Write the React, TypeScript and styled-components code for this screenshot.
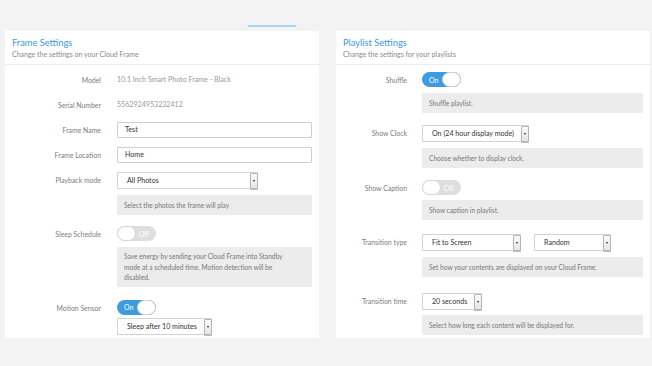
import styled, { createGlobalStyle } from "styled-components";

const GlobalStyle = createGlobalStyle`
  html, body {
    margin: 0;
    padding: 0;
    background: #f3f3f3;
    font-family: Lato, "Open Sans", sans-serif;
  }
`;

const Page = styled.div`
  width: 652px;
  height: 366px;
  background: #f3f3f3;
  overflow: hidden;
`;

const TopBar = styled.div`
  height: 31px;
  box-sizing: border-box;
  padding: 25px 0 0 248px;
`;

const TabLine = styled.div`
  width: 48px;
  height: 2px;
  background: #a6d3ef;
`;

const Columns = styled.div`
  display: flex;
  gap: 17px;
  padding-left: 5px;
`;

const Card = styled.section`
  width: 314px;
  height: 307px;
  background: #fff;
  box-sizing: border-box;
`;

const Header = styled.div`
  height: 34px;
  box-sizing: border-box;
  padding: 6px 7px 0;
  border-bottom: 1px solid #ececec;
`;

const Title = styled.div`
  font-size: 9.3px;
  line-height: 12px;
  color: #3b9bdc;
`;

const Subtitle = styled.div`
  font-size: 7px;
  line-height: 10px;
  color: #8a8a8a;
`;

const Body = styled.div`
  display: flex;
  flex-direction: column;
  padding-right: 7px;
`;

const Row = styled.div<{ $label: number; $gap: number; $mt: number }>`
  display: grid;
  grid-template-columns: ${(p) => p.$label}px 1fr;
  column-gap: ${(p) => p.$gap}px;
  margin-top: ${(p) => p.$mt}px;
`;

const Label = styled.div`
  text-align: right;
  font-size: 6.9px;
  line-height: 16px;
  color: #7d7d7d;
`;

const Field = styled.div<{ $gap?: number }>`
  display: flex;
  flex-direction: column;
  align-items: flex-start;
  gap: ${(p) => p.$gap ?? 6}px;
`;

const Value = styled.div`
  font-size: 7.1px;
  line-height: 16px;
  color: #9a9a9a;
`;

const Input = styled.div`
  width: 100%;
  height: 16px;
  box-sizing: border-box;
  border: 1px solid #cfcfcf;
  border-radius: 1px;
  padding-left: 7px;
  font-size: 7.1px;
  line-height: 14px;
  color: #333;
`;

const SelectBox = styled.div<{ $w: number }>`
  display: flex;
  width: ${(p) => p.$w}px;
  height: 17px;
  box-sizing: border-box;
  border: 1px solid #d3d3d3;
  border-radius: 1px;
  background: #fff;
`;

const SelectText = styled.div`
  flex: 1;
  padding-left: 9px;
  font-size: 7.1px;
  line-height: 15px;
  color: #333;
  white-space: nowrap;
`;

const ArrowBtn = styled.div`
  width: 6px;
  margin: 0 -1px -1px 0;
  border: 1px solid #b5b5b5;
  border-radius: 1px;
  background: linear-gradient(#fafafa, #e6e6e6);
  display: flex;
  align-items: center;
  justify-content: center;
  box-shadow: 0 1px 0 #bdbdbd;
`;

const Arrow = styled.div`
  width: 0;
  height: 0;
  border-left: 1.5px solid transparent;
  border-right: 1.5px solid transparent;
  border-top: 2px solid #222;
`;

const SelectPair = styled.div`
  display: flex;
  gap: 13px;
`;

const Help = styled.div<{ $multi?: boolean }>`
  width: 100%;
  box-sizing: border-box;
  background: #ececec;
  padding: ${(p) => (p.$multi ? "4px 16px 4px 7px" : "5px 7px")};
  font-size: 6.6px;
  line-height: ${(p) => (p.$multi ? "10.5px" : "10px")};
  color: #777;
`;

const ToggleTrack = styled.div<{ $on: boolean }>`
  position: relative;
  width: 39px;
  height: 15px;
  box-sizing: border-box;
  border-radius: 8px;
  background: ${(p) => (p.$on ? "#3d9be0" : "#dedede")};
  display: flex;
  align-items: center;
  justify-content: ${(p) => (p.$on ? "flex-start" : "flex-end")};
  padding: 0 7px;
  font-size: 7px;
  color: #fff;
`;

const Knob = styled.div<{ $on: boolean }>`
  position: absolute;
  top: 0;
  ${(p) => (p.$on ? "right: 0;" : "left: 0;")}
  width: 19px;
  height: 15px;
  box-sizing: border-box;
  border-radius: 8px;
  background: #fff;
  border: 1px solid #d5d5d5;
`;

function Toggle({ on }: { on: boolean }) {
  return (
    <ToggleTrack $on={on}>
      {on ? "On" : "Off"}
      <Knob $on={on} />
    </ToggleTrack>
  );
}

function Select({ value, width }: { value: string; width: number }) {
  return (
    <SelectBox $w={width}>
      <SelectText>{value}</SelectText>
      <ArrowBtn>
        <Arrow />
      </ArrowBtn>
    </SelectBox>
  );
}

function FrameSettings() {
  const L = { $label: 96, $gap: 16 };
  return (
    <Card>
      <Header>
        <Title>Frame Settings</Title>
        <Subtitle>Change the settings on your Cloud Frame</Subtitle>
      </Header>
      <Body>
        <Row {...L} $mt={7}>
          <Label>Model</Label>
          <Value>10.1 Inch Smart Photo Frame - Black</Value>
        </Row>
        <Row {...L} $mt={9}>
          <Label>Serial Number</Label>
          <Value>5562924953232412</Value>
        </Row>
        <Row {...L} $mt={9}>
          <Label>Frame Name</Label>
          <Input>Test</Input>
        </Row>
        <Row {...L} $mt={9}>
          <Label>Frame Location</Label>
          <Input>Home</Input>
        </Row>
        <Row {...L} $mt={9}>
          <Label>Playback mode</Label>
          <Field>
            <Select value="All Photos" width={141} />
            <Help>Select the photos the frame will play</Help>
          </Field>
        </Row>
        <Row {...L} $mt={11}>
          <Label>Sleep Schedule</Label>
          <Field>
            <Toggle on={false} />
            <Help $multi>
              Save energy by sending your Cloud Frame into Standby mode at a
              scheduled time. Motion detection will be disabled.
            </Help>
          </Field>
        </Row>
        <Row {...L} $mt={13}>
          <Label>Motion Sensor</Label>
          <Field $gap={3}>
            <Toggle on={true} />
            <Select value="Sleep after 10 minutes" width={95} />
          </Field>
        </Row>
      </Body>
    </Card>
  );
}

function PlaylistSettings() {
  const L = { $label: 71, $gap: 15 };
  return (
    <Card>
      <Header>
        <Title>Playlist Settings</Title>
        <Subtitle>Change the settings for your playlists</Subtitle>
      </Header>
      <Body>
        <Row {...L} $mt={7}>
          <Label>Shuffle</Label>
          <Field>
            <Toggle on={true} />
            <Help>Shuffle playlist.</Help>
          </Field>
        </Row>
        <Row {...L} $mt={12}>
          <Label>Show Clock</Label>
          <Field>
            <Select value="On (24 hour display mode)" width={107} />
            <Help>Choose whether to display clock.</Help>
          </Field>
        </Row>
        <Row {...L} $mt={12}>
          <Label>Show Caption</Label>
          <Field $gap={5}>
            <Toggle on={false} />
            <Help>Show caption in playlist.</Help>
          </Field>
        </Row>
        <Row {...L} $mt={14}>
          <Label>Transition type</Label>
          <Field>
            <SelectPair>
              <Select value="Fit to Screen" width={99} />
              <Select value="Random" width={77} />
            </SelectPair>
            <Help>Set how your contents are displayed on your Cloud Frame.</Help>
          </Field>
        </Row>
        <Row {...L} $mt={16}>
          <Label>Transition time</Label>
          <Field $gap={5}>
            <Select value="20 seconds" width={60} />
            <Help>Select how long each content will be displayed for.</Help>
          </Field>
        </Row>
      </Body>
    </Card>
  );
}

export default function App() {
  return (
    <Page>
      <GlobalStyle />
      <TopBar>
        <TabLine />
      </TopBar>
      <Columns>
        <FrameSettings />
        <PlaylistSettings />
      </Columns>
    </Page>
  );
}
